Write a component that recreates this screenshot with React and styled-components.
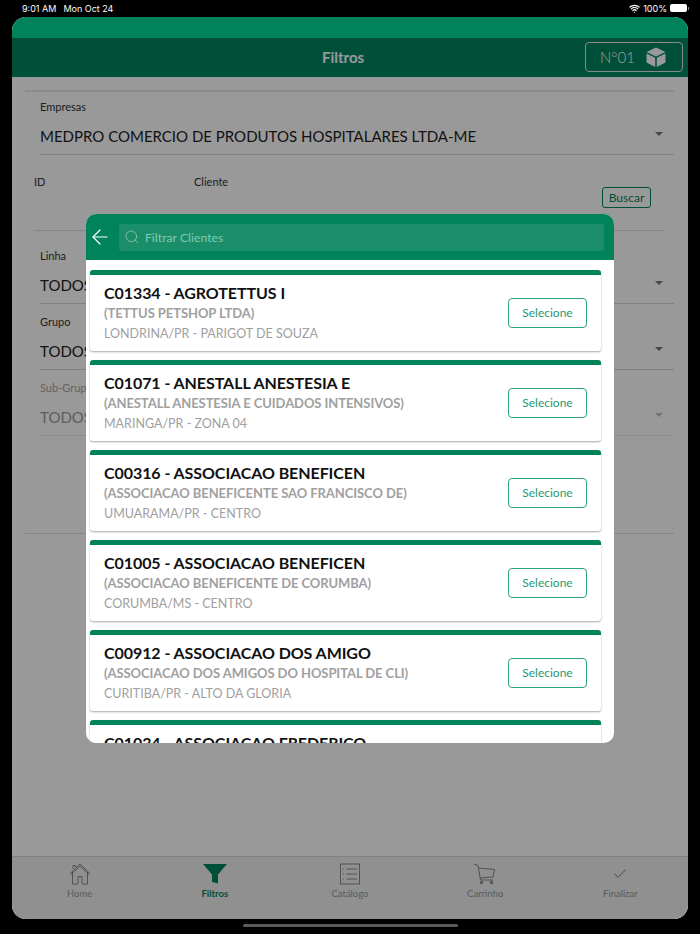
import React from 'react';
import styled, { createGlobalStyle } from 'styled-components';
import { ArrowLeft, Search, Check, Wifi } from 'lucide-react';

const GlobalStyle = createGlobalStyle`
  html, body {
    margin: 0;
    padding: 0;
    background: #000;
    font-family: 'Lato', 'Open Sans', sans-serif;
  }
  * { box-sizing: border-box; }
`;

const Page = styled.div`
  width: 700px;
  height: 934px;
  background: #000;
  display: flex;
  flex-direction: column;
  overflow: hidden;
`;

const StatusBar = styled.div`
  height: 17px;
  padding: 0 13px 1px 22px;
  display: flex;
  align-items: center;
  justify-content: space-between;
  color: #fff;
  font-size: 9px;
  font-family: 'Inter', sans-serif;
  span + span { margin-left: 7px; }
`;

const StatusRight = styled.div`
  display: flex;
  align-items: center;
  gap: 3px;
`;

const Battery = styled.i`
  display: block;
  width: 17px;
  height: 8px;
  background: #fff;
  border-radius: 2px;
  position: relative;
  &::after {
    content: '';
    position: absolute;
    right: -2px;
    top: 2.5px;
    width: 1px;
    height: 3px;
    background: #888;
  }
`;

const Screen = styled.div`
  margin: 0 12px;
  height: 902px;
  border-radius: 14px;
  overflow: hidden;
  display: flex;
  flex-direction: column;
  background: #fff;
  position: relative;
`;

const TopBand = styled.div`
  height: 21px;
  flex: none;
  background: #00835b;
`;

const Main = styled.div`
  flex: 1;
  display: flex;
  flex-direction: column;
  position: relative;
  min-height: 0;
`;

const Header = styled.header`
  height: 39px;
  flex: none;
  background: #008560;
  display: flex;
  align-items: flex-start;
  justify-content: flex-end;
  padding: 4px 5px 0 0;
  position: relative;
`;

const Title = styled.h1`
  position: absolute;
  left: 0;
  right: 14px;
  top: 9px;
  margin: 0;
  text-align: center;
  color: #fff;
  font-size: 15px;
  line-height: 20px;
  font-weight: 700;
`;

const OrderBtn = styled.div`
  width: 98px;
  height: 30px;
  border: 1px solid #e4e4e4;
  border-radius: 4px;
  display: flex;
  align-items: center;
  color: #fff;
  font-size: 15px;
  font-weight: 300;
  padding-left: 14px;
  gap: 11px;
`;

const Form = styled.div`
  flex: 1;
  padding: 13px 14px 0 13px;
  min-height: 0;
`;

const TopRule = styled.div`
  height: 2px;
  background: #e8e8e8;
  margin-bottom: 8px;
`;

const Field = styled.div`
  padding-left: 15px;
  height: ${p => p.$h || 66}px;
  position: relative;
  opacity: ${p => (p.$off ? 0.45 : 1)};
`;

const Label = styled.div`
  font-size: 11px;
  line-height: 14px;
  color: #333;
`;

const Value = styled.div`
  font-size: 15px;
  line-height: 20px;
  color: #222;
  margin-top: 12px;
  padding-bottom: 8px;
  border-bottom: 1px solid #d6d6d6;
  height: 29px;
  white-space: nowrap;
`;

const Caret = styled.i`
  position: absolute;
  right: 11px;
  top: 32px;
  border-left: 4.5px solid transparent;
  border-right: 4.5px solid transparent;
  border-top: 4.5px solid #777;
`;

const SearchRow = styled.div`
  display: flex;
  height: 56px;
  margin-left: 9px;
  border-bottom: 1px solid #e0e0e0;
  position: relative;
  width: 631px;
`;

const SearchCol = styled.div`
  width: ${p => p.$w}px;
  font-size: 11px;
  line-height: 14px;
  color: #333;
`;

const Buscar = styled.div`
  position: absolute;
  right: 14px;
  top: 12px;
  width: 49px;
  height: 21px;
  border: 1px solid #008560;
  border-radius: 3px;
  color: #008560;
  font-size: 12px;
  display: flex;
  align-items: center;
  justify-content: center;
`;

const Selects = styled.div`
  margin-top: 18px;
`;

const WideRule = styled.div`
  height: 1px;
  background: #ddd;
  margin-top: 86px;
`;

const TabBar = styled.nav`
  height: 63px;
  flex: none;
  background: #f0f0f0;
  border-top: 1px solid #d8d8d8;
  display: grid;
  grid-template-columns: repeat(5, 1fr);
`;

const Tab = styled.div`
  display: flex;
  flex-direction: column;
  align-items: center;
  padding-top: 6px;
  font-size: 9.5px;
  font-weight: ${p => (p.$active ? 700 : 400)};
  color: ${p => (p.$active ? '#008560' : '#999')};
  svg { display: block; height: 22px; margin-bottom: 3px; }
`;

const Overlay = styled.div`
  position: absolute;
  inset: 0;
  background: rgba(0, 0, 0, 0.4);
`;

const Modal = styled.div`
  position: absolute;
  left: 74px;
  top: 176px;
  width: 528px;
  height: 529px;
  background: #fff;
  border-radius: 10px;
  overflow: hidden;
  display: flex;
  flex-direction: column;
`;

const ModalHead = styled.div`
  height: 46px;
  flex: none;
  background: #00835b;
  display: flex;
  align-items: center;
  padding: 0 10px 0 2px;
  gap: 7px;
  color: #fff;
`;

const SearchBox = styled.div`
  flex: 1;
  height: 27px;
  background: #1a8e69;
  border-radius: 3px;
  display: flex;
  align-items: center;
  padding-left: 5px;
  gap: 5px;
  color: #86c8b1;
  font-size: 12px;
  letter-spacing: 0.1px;
`;

const List = styled.div`
  flex: 1;
  padding: 10px 13px 0 4px;
  display: flex;
  flex-direction: column;
  gap: 9px;
  overflow: hidden;
`;

const Card = styled.div`
  flex: none;
  height: 81px;
  border-top: 5px solid #00835b;
  border-radius: 3px;
  background: #fff;
  box-shadow: 0 1px 2px rgba(0, 0, 0, 0.35);
  padding: 8px 14px 0 14px;
  display: flex;
  align-items: center;
  justify-content: space-between;
`;

const CardText = styled.div`
  align-self: flex-start;
  white-space: nowrap;
`;

const Code = styled.div`
  font-size: 16px;
  line-height: 20px;
  font-weight: 700;
  color: #111;
  letter-spacing: -0.07px;
`;

const Company = styled.div`
  font-size: 13px;
  line-height: 20px;
  font-weight: 700;
  color: #a0a0a0;
  letter-spacing: -0.07px;
`;

const City = styled.div`
  font-size: 12.5px;
  line-height: 20px;
  margin-top: 1px;
  color: #a0a0a0;
`;

const Select = styled.div`
  width: 79px;
  height: 30px;
  margin-bottom: 9px;
  border: 1px solid #2fa582;
  border-radius: 4px;
  color: #1d9a75;
  font-size: 12px;
  display: flex;
  align-items: center;
  justify-content: center;
`;

const HomeBar = styled.div`
  flex: 1;
  display: flex;
  justify-content: center;
  padding-top: 5px;
  &::before {
    content: '';
    width: 215px;
    height: 3px;
    border-radius: 2px;
    background: #5a5a5a;
  }
`;

const clients = [
  ['C01334 - AGROTETTUS I', '(TETTUS PETSHOP LTDA)', 'LONDRINA/PR - PARIGOT DE SOUZA'],
  ['C01071 - ANESTALL ANESTESIA E', '(ANESTALL ANESTESIA E CUIDADOS INTENSIVOS)', 'MARINGA/PR - ZONA 04'],
  ['C00316 - ASSOCIACAO BENEFICEN', '(ASSOCIACAO BENEFICENTE SAO FRANCISCO DE)', 'UMUARAMA/PR - CENTRO'],
  ['C01005 - ASSOCIACAO BENEFICEN', '(ASSOCIACAO BENEFICENTE DE CORUMBA)', 'CORUMBA/MS - CENTRO'],
  ['C00912 - ASSOCIACAO DOS AMIGO', '(ASSOCIACAO DOS AMIGOS DO HOSPITAL DE CLI)', 'CURITIBA/PR - ALTO DA GLORIA'],
  ['C01034 - ASSOCIACAO FREDERICO', '', ''],
];

const CubeIcon = () => (
  <svg width="20" height="20" viewBox="0 0 20 20">
    <path d="M10 0.5 L19.5 5 L10 9.5 L0.5 5 Z" fill="#fff" />
    <path d="M0.5 6.5 L9.2 10.8 V20 L0.5 15.5 Z" fill="#fff" />
    <path d="M19.5 6.5 L10.8 10.8 V20 L19.5 15.5 Z" fill="#fff" />
  </svg>
);

const HomeIcon = () => (
  <svg width="22" height="22" viewBox="0 0 22 22" fill="none" stroke="#888" strokeWidth="1">
    <path d="M1 10.5 L11 1 L21 10.5 M3.5 9 V21 H9 V13.5 H13 V21 H18.5 V9 M4 5.5 V2.5 H6.5 V4" />
    <path d="M2 11.5 L11 3 L20 11.5" />
  </svg>
);

const FunnelIcon = () => (
  <svg width="26" height="22" viewBox="0 0 26 22">
    <path d="M1 1 H25 L16 11.5 V20.5 L10 19 V11.5 Z" fill="#008560" />
  </svg>
);

const CatalogIcon = () => (
  <svg width="22" height="22" viewBox="0 0 22 22" fill="none" stroke="#888" strokeWidth="1">
    <rect x="1.5" y="1" width="19" height="20" />
    <path d="M7.5 6 H18 M7.5 11 H18 M7.5 16 H18" />
    <path d="M4 6 H6 M4 11 H6 M4 16 H6" strokeDasharray="1 1" />
  </svg>
);

const CartIcon = () => (
  <svg width="24" height="22" viewBox="0 0 24 22" fill="none" stroke="#888" strokeWidth="1">
    <path d="M1 1 L5 2.5 L7.5 17 H20" />
    <path d="M5.5 5 L21.5 6.5 L20 14 L7 15" />
    <circle cx="8.5" cy="19.5" r="1.2" fill="#888" />
    <circle cx="18.5" cy="19.5" r="1.2" fill="#888" />
  </svg>
);

export default function App() {
  return (
    <Page>
      <GlobalStyle />
      <StatusBar>
        <div>
          <span>9:01 AM</span>
          <span>Mon Oct 24</span>
        </div>
        <StatusRight>
          <Wifi size={11} strokeWidth={2.6} />
          <span>100%</span>
          <Battery />
        </StatusRight>
      </StatusBar>
      <Screen>
        <TopBand />
        <Main>
          <Header>
            <Title>Filtros</Title>
            <OrderBtn>
              N°01
              <CubeIcon />
            </OrderBtn>
          </Header>
          <Form>
            <TopRule />
            <Field $h={75}>
              <Label>Empresas</Label>
              <Value>MEDPRO COMERCIO DE PRODUTOS HOSPITALARES LTDA-ME</Value>
              <Caret />
            </Field>
            <SearchRow>
              <SearchCol $w={160}>ID</SearchCol>
              <SearchCol $w={200}>Cliente</SearchCol>
              <Buscar>Buscar</Buscar>
            </SearchRow>
            <Selects>
              <Field>
                <Label>Linha</Label>
                <Value>TODOS</Value>
                <Caret />
              </Field>
              <Field>
                <Label>Grupo</Label>
                <Value>TODOS</Value>
                <Caret />
              </Field>
              <Field $off>
                <Label>Sub-Grupo</Label>
                <Value>TODOS</Value>
                <Caret />
              </Field>
            </Selects>
            <WideRule />
          </Form>
          <TabBar>
            <Tab><HomeIcon />Home</Tab>
            <Tab $active><FunnelIcon />Filtros</Tab>
            <Tab><CatalogIcon />Catálogo</Tab>
            <Tab><CartIcon />Carrinho</Tab>
            <Tab><Check size={16} strokeWidth={1.2} color="#555" />Finalizar</Tab>
          </TabBar>
          <Overlay />
          <Modal>
            <ModalHead>
              <ArrowLeft size={24} strokeWidth={1.2} />
              <SearchBox>
                <Search size={16} strokeWidth={1.3} />
                Filtrar Clientes
              </SearchBox>
            </ModalHead>
            <List>
              {clients.map(c => (
                <Card key={c[0]}>
                  <CardText>
                    <Code>{c[0]}</Code>
                    <Company>{c[1]}</Company>
                    <City>{c[2]}</City>
                  </CardText>
                  <Select>Selecione</Select>
                </Card>
              ))}
            </List>
          </Modal>
        </Main>
      </Screen>
      <HomeBar />
    </Page>
  );
}
